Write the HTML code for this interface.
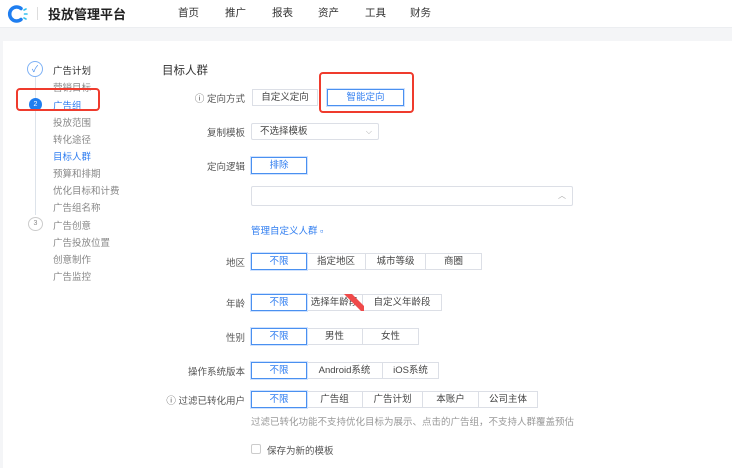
<!DOCTYPE html>
<html><head><meta charset="utf-8"><style>
*{margin:0;padding:0;box-sizing:border-box}
body{width:732px;height:468px;overflow:hidden;background:#f4f5f7;font-family:"Liberation Sans","Noto Sans CJK SC",sans-serif;color:#333;font-size:10px;position:relative}
.a{position:absolute;white-space:nowrap}
.hdr{position:absolute;left:0;top:0;width:732px;height:28px;background:#fff;border-bottom:1px solid #eceef1}
.card{position:absolute;left:3px;top:41px;width:729px;height:427px;background:#fff}
.nav{font-size:10.5px;color:#333;top:5px}
.side{font-size:9.5px;color:#888;left:53px}
.lbl{font-size:9.5px;color:#555;text-align:right;width:120px;left:125px}
.bg{position:absolute;display:flex;height:17px}
.bg div{border:1px solid #dcdfe6;margin-left:-1px;height:17px;line-height:15px;text-align:center;font-size:9.5px;color:#444;background:#fff}
.bg div.on{border-color:#4a90f0;color:#2f7df0;z-index:2;box-shadow:0 0 0 1px #cfe2ff}
.red{position:absolute;border:2px solid #ef3b2d;border-radius:4px}
</style></head><body>
<div class="hdr"></div>
<svg class="a" style="left:7px;top:4px" width="22" height="20" viewBox="0 0 22 20"><path d="M14 4.5 A7 7 0 1 0 14 15.5" fill="none" stroke="#1f7ef0" stroke-width="3.5" stroke-linecap="round"/><g stroke="#33c0f0" stroke-width="1.6" stroke-linecap="round"><line x1="17" y1="6" x2="19" y2="5"/><line x1="17.5" y1="10" x2="20" y2="10"/><line x1="17" y1="14" x2="19" y2="15"/></g></svg>
<div class="a" style="left:37px;top:7px;width:1px;height:13px;background:#ddd"></div>
<div class="a" style="left:48px;top:4px;font-size:13px;font-weight:bold;color:#222">投放管理平台</div>
<div class="a nav" style="left:178px">首页</div>
<div class="a nav" style="left:225px">推广</div>
<div class="a nav" style="left:272px">报表</div>
<div class="a nav" style="left:318px">资产</div>
<div class="a nav" style="left:365px">工具</div>
<div class="a nav" style="left:410px">财务</div>
<div class="card"></div>
<!-- sidebar -->
<div class="a" style="left:35px;top:77px;width:1px;height:138px;background:#dde3ea"></div>
<div class="a" style="left:27px;top:61px;width:16px;height:16px;border:1px solid #7fb2f5;border-radius:50%;background:#fff;color:#4a90f0;font-size:9px;text-align:center;line-height:14px">✓</div>
<div class="a side" style="top:63px;color:#333">广告计划</div>
<div class="a side" style="top:80px">营销目标</div>
<div class="a" style="left:29px;top:98px;width:13px;height:13px;border-radius:50%;background:#1f7ef0;color:#fff;font-size:7px;text-align:center;line-height:13px">2</div>
<div class="a side" style="top:98px;color:#2f7df0">广告组</div>
<div class="red" style="left:16px;top:88px;width:84px;height:23px"></div>
<div class="a side" style="top:115px">投放范围</div>
<div class="a side" style="top:132px">转化途径</div>
<div class="a side" style="top:149px;color:#2f7df0">目标人群</div>
<div class="a side" style="top:166px">预算和排期</div>
<div class="a side" style="top:183px">优化目标和计费</div>
<div class="a side" style="top:200px">广告组名称</div>
<div class="a" style="left:28px;top:217px;width:15px;height:14px;border:1px solid #ccc;border-radius:50%;background:#fff;color:#888;font-size:7px;text-align:center;line-height:12px">3</div>
<div class="a side" style="top:218px">广告创意</div>
<div class="a side" style="top:235px">广告投放位置</div>
<div class="a side" style="top:252px">创意制作</div>
<div class="a side" style="top:269px">广告监控</div>
<!-- main -->
<div class="a" style="left:162px;top:62px;font-size:11.5px;color:#333">目标人群</div>
<div class="a lbl" style="top:91px">ⓘ 定向方式</div>
<div class="bg" style="left:252px;top:89px"><div style="width:66px;margin-left:0">自定义定向</div></div>
<div class="bg" style="left:327px;top:89px"><div class="on" style="width:77px;margin-left:0">智能定向</div></div>
<div class="red" style="left:319px;top:72px;width:95px;height:41px"></div>
<div class="a lbl" style="top:125px">复制模板</div>
<div class="a" style="left:251px;top:123px;width:128px;height:17px;border:1px solid #dcdfe6;border-radius:2px;font-size:9.5px;color:#444;padding-left:8px;line-height:15px">不选择模板<span style="position:absolute;right:6px;color:#aaa;font-size:8px">⌵</span></div>
<div class="a lbl" style="top:159px">定向逻辑</div>
<div class="bg" style="left:251px;top:157px"><div class="on" style="width:56px;margin-left:0">排除</div></div>
<div class="a" style="left:251px;top:186px;width:322px;height:20px;border:1px solid #dcdfe6;border-radius:2px"><span style="position:absolute;right:6px;top:3px;color:#aaa;font-size:8px">︿</span></div>
<div class="a" style="left:251px;top:223px;font-size:9.5px;color:#2f7df0">管理自定义人群 ▫</div>
<div class="a lbl" style="top:255px">地区</div>
<div class="bg" style="left:251px;top:253px"><div class="on" style="width:56px;margin-left:0">不限</div><div style="width:60px">指定地区</div><div style="width:61px">城市等级</div><div style="width:57px">商圈</div></div>
<div class="a lbl" style="top:296px">年龄</div>
<div class="bg" style="left:251px;top:294px"><div class="on" style="width:56px;margin-left:0">不限</div><div style="width:57px">选择年龄段</div><div style="width:80px">自定义年龄段</div></div>
<svg class="a" style="left:344px;top:294px" width="20" height="17"><polygon points="0,0 8,0 20,12 20,17 17,17" fill="#ef4a4a"/></svg>
<div class="a lbl" style="top:330px">性别</div>
<div class="bg" style="left:251px;top:328px"><div class="on" style="width:56px;margin-left:0">不限</div><div style="width:57px">男性</div><div style="width:57px">女性</div></div>
<div class="a lbl" style="top:364px">操作系统版本</div>
<div class="bg" style="left:251px;top:362px"><div class="on" style="width:56px;margin-left:0">不限</div><div style="width:77px">Android系统</div><div style="width:57px">iOS系统</div></div>
<div class="a lbl" style="top:393px">ⓘ 过滤已转化用户</div>
<div class="bg" style="left:251px;top:391px"><div class="on" style="width:56px;margin-left:0">不限</div><div style="width:57px">广告组</div><div style="width:61px">广告计划</div><div style="width:57px">本账户</div><div style="width:60px">公司主体</div></div>
<div class="a" style="left:251px;top:414px;font-size:9.5px;color:#999">过滤已转化功能不支持优化目标为展示、点击的广告组，不支持人群覆盖预估</div>
<div class="a" style="left:251px;top:444px;width:10px;height:10px;border:1px solid #ccc;border-radius:2px"></div>
<div class="a" style="left:267px;top:443px;font-size:9.5px;color:#555">保存为新的模板</div>
</body></html>
